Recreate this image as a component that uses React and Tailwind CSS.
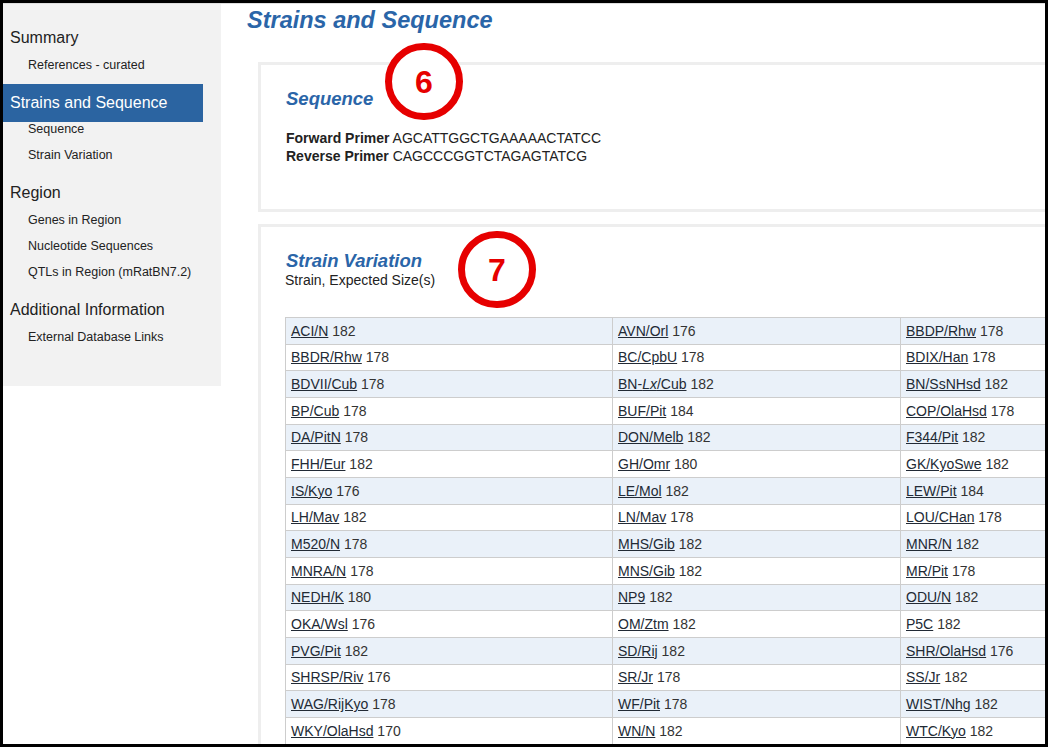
const rows = [
  [['ACI/N', '182'], ['AVN/Orl', '176'], ['BBDP/Rhw', '178']],
  [['BBDR/Rhw', '178'], ['BC/CpbU', '178'], ['BDIX/Han', '178']],
  [['BDVII/Cub', '178'], ['BN-Lx/Cub', '182'], ['BN/SsNHsd', '182']],
  [['BP/Cub', '178'], ['BUF/Pit', '184'], ['COP/OlaHsd', '178']],
  [['DA/PitN', '178'], ['DON/Melb', '182'], ['F344/Pit', '182']],
  [['FHH/Eur', '182'], ['GH/Omr', '180'], ['GK/KyoSwe', '182']],
  [['IS/Kyo', '176'], ['LE/Mol', '182'], ['LEW/Pit', '184']],
  [['LH/Mav', '182'], ['LN/Mav', '178'], ['LOU/CHan', '178']],
  [['M520/N', '178'], ['MHS/Gib', '182'], ['MNR/N', '182']],
  [['MNRA/N', '178'], ['MNS/Gib', '182'], ['MR/Pit', '178']],
  [['NEDH/K', '180'], ['NP9', '182'], ['ODU/N', '182']],
  [['OKA/Wsl', '176'], ['OM/Ztm', '182'], ['P5C', '182']],
  [['PVG/Pit', '182'], ['SD/Rij', '182'], ['SHR/OlaHsd', '176']],
  [['SHRSP/Riv', '176'], ['SR/Jr', '178'], ['SS/Jr', '182']],
  [['WAG/RijKyo', '178'], ['WF/Pit', '178'], ['WIST/Nhg', '182']],
  [['WKY/OlaHsd', '170'], ['WN/N', '182'], ['WTC/Kyo', '182']],
]

const nav = [
  { title: 'Summary', items: ['References - curated'] },
  { title: 'Strains and Sequence', active: true, items: ['Sequence', 'Strain Variation'] },
  { title: 'Region', items: ['Genes in Region', 'Nucleotide Sequences', 'QTLs in Region (mRatBN7.2)'] },
  { title: 'Additional Information', items: ['External Database Links'] },
]

function StrainName({ name }) {
  // BN-Lx has the Lx part in italics
  if (name === 'BN-Lx/Cub') {
    return (
      <a className="underline text-[#222a35]">
        BN-<i>Lx</i>/Cub
      </a>
    )
  }
  return <a className="underline text-[#222a35]">{name}</a>
}

function Marker({ n, className }) {
  return (
    <div className={`absolute w-[78px] h-[77px] rounded-full border-[7px] border-[#e60000] bg-white flex items-center justify-center ${className}`}>
      <span className="text-[32px] leading-none font-bold text-[#e60000]">{n}</span>
    </div>
  )
}

export default function App() {
  return (
    <div className="relative w-[1048px] h-[747px] border-[3px] border-black bg-white overflow-hidden font-['Liberation_Sans',Arial,sans-serif] text-[#222]">
      <div className="absolute top-0 left-0 right-0 h-px bg-[#dedede]" />
      <div className="flex items-start">
        {/* ── Left nav ── */}
        <aside className="w-[218px] shrink-0 bg-[#f2f2f2] pt-[16px] pb-[30px]">
          {nav.map(section => (
            <div key={section.title}>
              {section.active ? (
                <div className="w-[200px] h-[38px] bg-[#2b64a1] text-white pl-[7px] flex items-center text-[16px]">
                  {section.title}
                </div>
              ) : (
                <div className="pl-[7px] pt-[10px] pb-[11px] text-[16px] leading-[18px]">{section.title}</div>
              )}
              {section.items.map(item => (
                <div key={item} className="h-[26px] pl-[25px] text-[12.5px] leading-[14px]">
                  {item}
                </div>
              ))}
            </div>
          ))}
        </aside>

        {/* ── Main ── */}
        <main className="flex-1 min-w-0 overflow-hidden">
          <h1 className="pl-[26px] pt-[3px] text-[23.5px] leading-[28px] font-bold italic text-[#2a65a8]">
            Strains and Sequence
          </h1>

          <section className="ml-[37px] mt-[28px] w-[820px] h-[150px] border-[3px] border-[#eeeeee] pl-[25px] pt-[23px]">
            <h2 className="text-[18.5px] leading-[22px] font-bold italic text-[#2a65a8]">Sequence</h2>
            <div className="mt-[19px] text-[14px] leading-[18px]">
              <div><b>Forward Primer</b> AGCATTGGCTGAAAAACTATCC</div>
              <div><b>Reverse Primer</b> CAGCCCGGTCTAGAGTATCG</div>
            </div>
          </section>

          <section className="ml-[37px] mt-[12px] w-[820px] border-[3px] border-[#eeeeee] pl-[24px] pt-[23px]">
            <h2 className="pl-px text-[18.5px] leading-[22px] font-bold italic text-[#2a65a8]">Strain Variation</h2>
            <div className="text-[14px] leading-[16px]">Strain, Expected Size(s)</div>
            <table className="mt-[29px] table-fixed border-collapse w-[915px] text-[14px] leading-[16px]">
              <colgroup>
                <col className="w-[327px]" />
                <col className="w-[288px]" />
                <col className="w-[300px]" />
              </colgroup>
              <tbody>
                {rows.map((row, i) => (
                  <tr key={i} className={i % 2 === 0 ? 'bg-[#eaf1f9]' : 'bg-white'}>
                    {row.map(([name, size]) => (
                      <td key={name} className="h-[26.67px] p-0 pl-[5px] border border-[#cdcdcd] text-[#333]">
                        <StrainName name={name} /> {size}
                      </td>
                    ))}
                  </tr>
                ))}
              </tbody>
            </table>
          </section>
        </main>
      </div>

      <Marker n="6" className="left-[382px] top-[40px]" />
      <Marker n="7" className="left-[455px] top-[228px]" />
    </div>
  )
}
